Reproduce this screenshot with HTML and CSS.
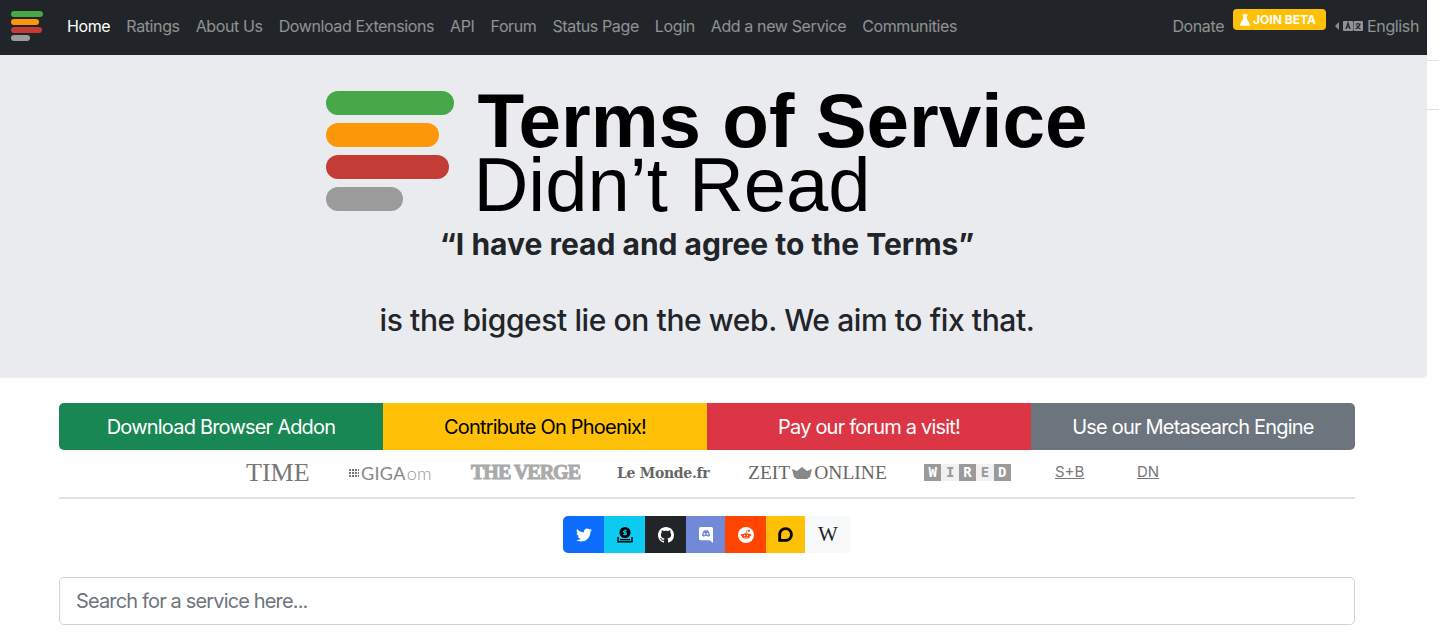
FILE: index.html
```html
<!DOCTYPE html>
<html lang="en">
<head>
    <meta charset="UTF-8">
    <meta name="viewport" content="width=device-width, initial-scale=1.0">
    <title>Terms of Service; Didn't Read</title>
    <link rel="stylesheet" href="styles.css">
</head>
<body>
<div class="page">
    <main class="main">
        <nav class="navbar">
            <svg class="nav-logo" viewBox="0 0 32 32" width="32" height="32">
                <rect x="0" y="1" width="32" height="6" rx="3" fill="#46a846"/>
                <rect x="0" y="9" width="28" height="6" rx="3" fill="#fb9708"/>
                <rect x="0" y="17" width="31" height="6" rx="3" fill="#c33c36"/>
                <rect x="0" y="25" width="19" height="6" rx="3" fill="#9b9b9b"/>
            </svg>
            <a class="nav-link active" href="#">Home</a>
            <a class="nav-link" href="#">Ratings</a>
            <a class="nav-link" href="#">About Us</a>
            <a class="nav-link" href="#">Download Extensions</a>
            <a class="nav-link" href="#">API</a>
            <a class="nav-link" href="#">Forum</a>
            <a class="nav-link" href="#">Status Page</a>
            <a class="nav-link" href="#">Login</a>
            <a class="nav-link" href="#">Add a new Service</a>
            <a class="nav-link" href="#">Communities</a>
            <div class="nav-right">
                <a class="nav-link" href="#">Donate</a>
                <span class="beta-badge">
                    <svg viewBox="0 0 12 14" width="10" height="12"><path fill="#fff" d="M3 0h6v1.500H8.200v4L12 12.200c.4.800-.1 1.800-1 1.800H1c-.9 0-1.400-1-1-1.800L3.800 5.500v-4H3z"/></svg>
                    JOIN BETA
                </span>
                <a class="lang" href="#">
                    <span class="caret"></span>
                    <svg viewBox="0 0 20 10" width="20" height="10">
                        <rect width="10" height="10" rx="1" fill="#909295"/>
                        <rect x="10.500" width="9.500" height="10" rx="1" fill="#909295"/>
                        <path fill="none" stroke="#212529" stroke-width="1.200" d="M3 8l2-6 2 6M3.800 6h2.400M12.500 3h5M15 2v1M17 3c-.5 2.500-2 4-4.500 5M13.500 4.500c.8 1.500 2 2.800 4 3.500"/>
                    </svg>
                    English
                </a>
            </div>
        </nav>

        <header class="hero">
            <div class="brand">
                <svg class="brand-mark" viewBox="0 0 128 120" width="128" height="120">
                    <rect x="0" y="0" width="128" height="24" rx="12" fill="#46a846"/>
                    <rect x="0" y="32" width="113" height="24" rx="12" fill="#fb9708"/>
                    <rect x="0" y="64" width="123" height="24" rx="12" fill="#c33c36"/>
                    <rect x="0" y="96" width="77" height="24" rx="12" fill="#9b9b9b"/>
                </svg>
                <div class="brand-text">
                    <div class="brand-top">Terms of Service</div>
                    <div class="brand-bottom">Didn’t Read</div>
                </div>
            </div>
            <h2 class="tagline">“I have read and agree to the Terms”</h2>
            <h2 class="tagline-sub">is the biggest lie on the web. We aim to fix that.</h2>
        </header>

        <section class="content">
            <div class="action-group">
                <a class="action action-green" href="#">Download Browser Addon</a>
                <a class="action action-yellow" href="#">Contribute On Phoenix!</a>
                <a class="action action-red" href="#">Pay our forum a visit!</a>
                <a class="action action-grey" href="#">Use our Metasearch Engine</a>
            </div>

            <div class="press">
                <span class="press-time">TIME</span>
                <span class="press-giga"><svg viewBox="0 0 12 12" width="12" height="12"><path fill="none" stroke="#777" stroke-width="2" stroke-dasharray="2 1" d="M1 3h10M1 6h10M1 9h10"/></svg>GIGA<span class="press-giga-light">om</span></span>
                <span class="press-verge">THE VERGE</span>
                <span class="press-monde">Le Monde.fr</span>
                <span class="press-zeit">ZEIT<svg viewBox="0 0 24 14" width="24" height="14"><path fill="#888" d="M2 3l5 2 5-4 5 4 5-2-2 8-3 2H7l-3-2z"/></svg>ONLINE</span>
                <span class="press-wired"><b>W</b><i>I</i><b>R</b><i>E</i><b>D</b></span>
                <a class="press-link press-sb" href="#">S+B</a>
                <a class="press-link" href="#">DN</a>
            </div>

            <hr class="divider">

            <div class="social">
                <a class="social-btn social-twitter" href="#">
                    <svg viewBox="0 0 512 512" width="16" height="16"><path fill="#fff" d="M459.37 151.716c.325 4.548.325 9.097.325 13.645 0 138.72-105.583 298.558-298.558 298.558-59.452 0-114.68-17.219-161.137-47.106 8.447.974 16.568 1.299 25.34 1.299 49.055 0 94.213-16.568 130.274-44.832-46.132-.975-84.792-31.188-98.112-72.772 6.498.974 12.995 1.624 19.818 1.624 9.421 0 18.843-1.3 27.614-3.573-48.081-9.747-84.143-51.98-84.143-102.985v-1.299c13.969 7.797 30.214 12.67 47.431 13.319-28.264-18.843-46.781-51.005-46.781-87.391 0-19.492 5.197-37.36 14.294-52.954 51.655 63.675 129.3 105.258 216.365 109.807-1.624-7.797-2.599-15.918-2.599-24.04 0-57.828 46.782-104.934 104.934-104.934 30.213 0 57.502 12.67 76.67 33.137 23.715-4.548 46.456-13.645 66.599-25.665-7.798 24.366-24.366 44.833-46.132 57.827 21.117-2.273 41.584-8.122 60.426-16.243-14.292 20.791-32.161 39.308-52.628 54.253z"/></svg>
                </a>
                <a class="social-btn social-donate" href="#">
                    <svg viewBox="0 0 16 16" width="16" height="16">
                        <circle cx="8" cy="5.500" r="5.500" fill="#000"/>
                        <path fill="none" stroke="#0dcaf0" stroke-width="1.100" d="M10 3.700H7.200a1 1 0 0 0 0 1.900h1.600a1 1 0 0 1 0 1.900H6M8 2.600v5.800"/>
                        <path fill="none" stroke="#000" stroke-width="1.500" d="M1 10v4.800h14V10"/>
                        <path fill="#000" d="M3 12h10v1.200H3z"/>
                    </svg>
                </a>
                <a class="social-btn social-github" href="#">
                    <svg viewBox="0 0 16 16" width="16" height="16"><path fill="#fff" d="M8 0C3.58 0 0 3.58 0 8c0 3.54 2.29 6.53 5.47 7.59.4.07.55-.17.55-.38 0-.19-.01-.82-.01-1.49-2.01.37-2.53-.49-2.69-.94-.09-.23-.48-.94-.82-1.13-.28-.15-.68-.52-.01-.53.63-.01 1.08.58 1.23.82.72 1.21 1.87.87 2.33.66.07-.52.28-.87.51-1.07-1.78-.2-3.64-.89-3.64-3.95 0-.87.31-1.59.82-2.15-.08-.2-.36-1.02.08-2.12 0 0 .67-.21 2.2.82.64-.18 1.32-.27 2-.27.68 0 1.36.09 2 .27 1.53-1.04 2.2-.82 2.2-.82.44 1.1.16 1.92.08 2.12.51.56.82 1.27.82 2.15 0 3.07-1.87 3.75-3.65 3.95.29.25.54.73.54 1.48 0 1.07-.01 1.93-.01 2.2 0 .21.15.46.55.38A8.013 8.013 0 0016 8c0-4.42-3.58-8-8-8z"/></svg>
                </a>
                <a class="social-btn social-discord" href="#">
                    <svg viewBox="0 0 14 16" width="14" height="16">
                        <path fill="#fff" d="M1.700 0h10.600C13.200 0 14 .8 14 1.700V16l-3.200-2.800H1.700C.8 13.200 0 12.400 0 11.500V1.700C0 .8.800 0 1.700 0z"/>
                        <path fill="#7289da" d="M4.600 3.700c.8-.4 1.500-.5 2.400-.5s1.600.1 2.400.5c1 1.500 1.500 3.200 1.500 5-.7.6-1.400.9-2.100 1l-.5-.8c.4-.1.700-.3 1-.5-1.500.8-3.100.8-4.600 0 .3.2.6.4 1 .5l-.5.800c-.7-.1-1.400-.4-2.100-1 0-1.800.5-3.500 1.500-5z"/>
                        <circle cx="5.500" cy="6.800" r=".9" fill="#fff"/>
                        <circle cx="8.500" cy="6.800" r=".9" fill="#fff"/>
                    </svg>
                </a>
                <a class="social-btn social-reddit" href="#">
                    <svg viewBox="0 0 16 16" width="16" height="16">
                        <circle cx="8" cy="8" r="8" fill="#fff"/>
                        <ellipse cx="8" cy="9" rx="4" ry="2.800" fill="#ff4500"/>
                        <circle cx="3.800" cy="8" r="1.100" fill="#ff4500"/>
                        <circle cx="12.200" cy="8" r="1.100" fill="#ff4500"/>
                        <circle cx="11" cy="3.800" r="1" fill="#ff4500"/>
                        <path fill="none" stroke="#ff4500" stroke-width=".7" d="M8 6.500L8.700 3.700l2.300.3"/>
                        <circle cx="6.500" cy="8.500" r=".7" fill="#fff"/>
                        <circle cx="9.500" cy="8.500" r=".7" fill="#fff"/>
                        <path fill="none" stroke="#fff" stroke-width=".6" d="M6.300 10.300c1 .7 2.400 .7 3.400 0"/>
                    </svg>
                </a>
                <a class="social-btn social-discourse" href="#">
                    <svg viewBox="0 0 16 16" width="15" height="15"><path fill-rule="evenodd" fill="#000" d="M8.200 .2C3.900 .2.300 3.600.300 7.900V15.800h7.900c4.300 0 7.600-3.500 7.600-7.800S12.500.2 8.200.2zm0 2.900c2.700 0 4.700 2.200 4.700 4.900s-2 4.900-4.700 4.900H3.300V7.900c0-2.700 2.200-4.800 4.900-4.800z"/></svg>
                </a>
                <a class="social-btn social-wiki" href="#">W</a>
            </div>

            <input class="search" type="text" placeholder="Search for a service here...">
        </section>
    </main>
    <div class="edge"><div class="edge-lines"></div></div>
</div>
</body>
</html>
```

FILE: styles.css
```css
body {
    margin: 0;
    font-family: 'Inter', 'Liberation Sans', sans-serif;
    font-size: 16px;
    color: #212529;
    background-color: #fff;
    overflow: hidden;
}

a {
    text-decoration: none;
}

.page {
    display: flex;
    width: 1439px;
}

.main {
    width: 1427px;
    flex-shrink: 0;
}

.edge {
    flex: 1;
    padding-top: 60px;
}

.edge-lines {
    height: 48px;
    border-top: 1px solid #dee2e6;
    border-bottom: 1px solid #dee2e6;
}

.navbar {
    display: flex;
    align-items: center;
    height: 55px;
    padding: 0 8px 3px 11px;
    background-color: #212529;
    box-sizing: border-box;
}

.nav-logo {
    margin-right: 16px;
}

.nav-link {
    padding: 0 8px;
    color: rgba(255, 255, 255, 0.5);
    line-height: 24px;
    letter-spacing: -0.38px;
    white-space: nowrap;
}

.nav-link.active {
    color: #fff;
}

.nav-right {
    display: flex;
    align-items: center;
    margin-left: auto;
}

.beta-badge {
    display: flex;
    align-items: center;
    gap: 3px;
    width: 93px;
    height: 21px;
    margin: -13px 0 0 1px;
    padding: 0 7px;
    box-sizing: border-box;
    background-color: #ffc107;
    border-radius: 4px;
    color: #fff;
    font-size: 12px;
    font-weight: 700;
    white-space: nowrap;
}

.lang {
    display: flex;
    align-items: center;
    gap: 4px;
    margin-left: 9px;
    color: rgba(255, 255, 255, 0.5);
    line-height: 24px;
    letter-spacing: -0.38px;
}

.caret {
    width: 0;
    height: 0;
    border-top: 4px solid transparent;
    border-bottom: 4px solid transparent;
    border-right: 4px solid #8a8c8f;
}

.hero {
    height: 323px;
    padding: 36px 72px 0 59px;
    box-sizing: border-box;
    background-color: #eaebef;
    border-bottom-right-radius: 5px;
    text-align: center;
}

.brand {
    display: flex;
    justify-content: center;
    gap: 23px;
}

.brand-text {
    margin-top: -2px;
    color: #000;
    font-family: 'Liberation Sans', Arial, sans-serif;
    font-size: 76px;
    line-height: 64px;
    text-align: left;
}

.brand-top {
    font-size: 76.400px;
    font-weight: 700;
}

.brand-bottom {
    margin-left: -4px;
}

.tagline {
    margin: 10px 0 0;
    font-size: 30px;
    font-weight: 700;
    line-height: 34px;
}

.tagline-sub {
    margin: 42px 0 0;
    font-size: 30px;
    font-weight: 500;
    line-height: 34px;
    letter-spacing: -0.4px;
}

.content {
    width: 1296px;
    margin-left: 59px;
}

.action-group {
    display: flex;
    margin-top: 25px;
    border-radius: 5px;
    overflow: hidden;
}

.action {
    flex: 1;
    height: 47px;
    color: #fff;
    font-size: 20px;
    line-height: 48px;
    letter-spacing: -0.8px;
    text-align: center;
}

.action-green {
    background-color: #198754;
}

.action-yellow {
    background-color: #ffc107;
    color: #000;
}

.action-red {
    background-color: #dc3545;
}

.action-grey {
    background-color: #6c757d;
}

.press {
    display: flex;
    align-items: center;
    height: 47px;
    padding: 0 0 2px 187px;
    box-sizing: border-box;
    color: #888;
    white-space: nowrap;
}

.press-time {
    width: 63px;
    margin-right: 39px;
    font-family: 'Liberation Serif', serif;
    font-size: 26px;
    color: #777;
}

.press-giga {
    display: flex;
    align-items: center;
    gap: 1px;
    width: 84px;
    margin-right: 39px;
    font-family: 'Lato', sans-serif;
    font-size: 18px;
    letter-spacing: 0.300px;
    color: #888;
}

.press-giga-light {
    font-weight: 300;
    color: #999;
}

.press-verge {
    width: 110px;
    margin-right: 36px;
    font-family: 'Liberation Serif', serif;
    font-size: 20px;
    font-weight: 700;
    letter-spacing: -1px;
    color: #aaa;
    -webkit-text-stroke: 1px #aaa;
}

.press-monde {
    width: 94px;
    margin-right: 37px;
    font-family: 'DejaVu Serif', serif;
    font-size: 14px;
    font-weight: 700;
    letter-spacing: -0.300px;
    color: #666;
}

.press-zeit {
    display: flex;
    align-items: center;
    width: 139px;
    margin-right: 37px;
    font-family: 'Liberation Serif', serif;
    font-size: 19.500px;
    color: #666;
}

.press-wired {
    display: flex;
    width: 87px;
    margin-right: 44px;
    height: 17px;
    font-family: 'DejaVu Sans Mono', monospace;
    font-size: 14px;
    font-weight: 700;
    line-height: 17px;
    text-align: center;
}

.press-wired b {
    flex: 1;
    background-color: #9a9a9a;
    color: #fff;
}

.press-wired i {
    flex: 1;
    font-style: normal;
    color: #999;
    background-color: #f1f1f1;
}

.press-link {
    color: #777;
    font-size: 15px;
    text-decoration: underline;
    margin-top: -3px;
}

.press-sb {
    width: 30px;
    margin-right: 52px;
}

.divider {
    height: 2px;
    margin: 0;
    border: none;
    background-color: #e2e2e2;
}

.social {
    display: flex;
    justify-content: center;
    width: 288px;
    margin: 17px auto 0;
    border-radius: 5px;
    overflow: hidden;
}

.social-btn {
    display: flex;
    align-items: center;
    justify-content: center;
    width: 41px;
    height: 37px;
}

.social-twitter {
    background-color: #0d6efd;
}

.social-donate {
    background-color: #0dcaf0;
}

.social-github {
    background-color: #212529;
}

.social-discord {
    width: 39px;
    background-color: #7289da;
}

.social-reddit {
    background-color: #ff4500;
}

.social-discourse {
    width: 39px;
    background-color: #ffc107;
}

.social-wiki {
    width: 46px;
    background-color: #f8f9fa;
    color: #212529;
    font-family: 'Liberation Serif', serif;
    font-size: 21px;
}

.search {
    display: block;
    width: 100%;
    height: 48px;
    margin-top: 24px;
    padding: 0 16px;
    box-sizing: border-box;
    border: 1px solid #ced4da;
    border-radius: 5px;
    font-family: 'Inter', sans-serif;
    font-size: 20px;
    letter-spacing: -0.85px;
}

.search::placeholder {
    color: #6c757d;
}
```
